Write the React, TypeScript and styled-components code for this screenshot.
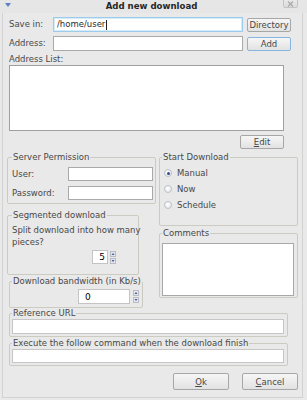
import styled, { createGlobalStyle } from 'styled-components'

const GlobalStyle = createGlobalStyle`
* { box-sizing: border-box; }
html, body { margin: 0; padding: 0; background: #e9e9e9; }
body {
    font-family: "DejaVu Sans", "Liberation Sans", sans-serif;
    font-size: 8.5px;
    color: #484848;
}
`

const Up = () => (
    <svg width="6" height="6" viewBox="0 0 6 6">
        <rect x="0.5" y="0.5" width="5" height="5" fill="#e4e6ea" stroke="#b9bcc4" />
        <path d="M1.5 4 L3 2 L4.5 4 Z" fill="#3f5fa8" />
    </svg>
)

const Down = () => (
    <svg width="6" height="6" viewBox="0 0 6 6">
        <rect x="0.5" y="0.5" width="5" height="5" fill="#e4e6ea" stroke="#b9bcc4" />
        <path d="M1.5 2 L3 4 L4.5 2 Z" fill="#3f5fa8" />
    </svg>
)

const App = () => {
    return (
        <Window>
            <GlobalStyle />
            <TitleBar>
                <MenuArrow>
                    <svg width="6" height="4" viewBox="0 0 6 4">
                        <path d="M0 0 L6 0 L3 4 Z" fill="#5b7fc4" />
                    </svg>
                </MenuArrow>
                <Title>Add new download</Title>
                <CloseBtn>
                    <svg width="7" height="6" viewBox="0 0 7 6">
                        <path d="M1 0.5 L6 5.5 M6 0.5 L1 5.5" stroke="#a8a8a8" strokeWidth="1.2" />
                    </svg>
                </CloseBtn>
            </TitleBar>

            <Body>
                <FormRow>
                    <RowLabel>Save in:</RowLabel>
                    <FocusField>
                        /home/user<Caret />
                    </FocusField>
                    <Button>Directory</Button>
                </FormRow>
                <FormRow>
                    <RowLabel>Address:</RowLabel>
                    <TextInput $h={15} />
                    <Button $default>Add</Button>
                </FormRow>

                <ListLabel>Address List:</ListLabel>
                <ListBox />
                <EditRow>
                    <Button><u>E</u>dit</Button>
                </EditRow>

                <Columns>
                    <Column>
                        <ServerGroup>
                            <Legend>Server Permission</Legend>
                            <PermGrid>
                                <GridLabel>User:</GridLabel>
                                <TextInput $h={14} />
                                <GridLabel>Password:</GridLabel>
                                <TextInput $h={14} />
                            </PermGrid>
                        </ServerGroup>

                        <SegmentGroup>
                            <Legend>Segmented download</Legend>
                            <GroupText>Split download into how many<br />pieces?</GroupText>
                            <SpinRow $pl={80} $mt={2}>
                                <SpinInput $w={16} $h={14} defaultValue="5" />
                                <SpinArrows><Up /><Down /></SpinArrows>
                            </SpinRow>
                        </SegmentGroup>

                        <BandwidthGroup>
                            <Legend>Download bandwidth (in Kb/s)</Legend>
                            <SpinRow $pl={66} $mt={1}>
                                <SpinInput $w={52} $h={15} $left defaultValue="0" />
                                <SpinArrows $gap={3}><Up /><Down /></SpinArrows>
                            </SpinRow>
                        </BandwidthGroup>
                    </Column>

                    <Column>
                        <StartGroup>
                            <Legend>Start Download</Legend>
                            <RadioList>
                                <RadioRow><Radio $checked />Manual</RadioRow>
                                <RadioRow><Radio />Now</RadioRow>
                                <RadioRow><Radio />Schedule</RadioRow>
                            </RadioList>
                        </StartGroup>

                        <CommentsGroup>
                            <Legend>Comments</Legend>
                            <CommentBox />
                        </CommentsGroup>
                    </Column>
                </Columns>

                <WideGroup>
                    <Legend>Reference URL</Legend>
                    <WideInput $h={15} />
                </WideGroup>

                <WideGroup $mt={1}>
                    <Legend>Execute the follow command when the download finish</Legend>
                    <WideInput $h={14} />
                </WideGroup>

                <ButtonRow>
                    <DialogButton><u>O</u>k</DialogButton>
                    <DialogButton><u>C</u>ancel</DialogButton>
                </ButtonRow>
            </Body>
        </Window>
    )
}

export default App

const Window = styled.div`
width: 307px;
height: 400px;
background: #e9e9e9;
overflow: hidden;
`

const TitleBar = styled.div`
height: 13px;
position: relative;
display: flex;
align-items: center;
justify-content: center;
background: #e6e6e6;
`

const MenuArrow = styled.span`
position: absolute;
left: 5px;
top: 3px;
display: flex;
`

const Title = styled.div`
font-weight: bold;
font-size: 8.6px;
color: #262626;
line-height: 13px;
margin-left: -4px;
`

const CloseBtn = styled.span`
position: absolute;
right: 9px;
top: -3px;
width: 15px;
height: 11px;
border: 1px solid #c4c4c4;
border-radius: 2px;
background: linear-gradient(#ececec, #dcdcdc);
display: flex;
align-items: center;
justify-content: center;
padding-top: 2px;
`

const Body = styled.div`
margin: 0 4px 0 2px;
border: 1px solid #d2d2d2;
border-top: none;
padding: 4px 15px 7px 6px;
`

const FormRow = styled.div`
display: grid;
grid-template-columns: 40px 190px 44px;
column-gap: 4px;
align-items: center;
height: 15px;
margin-bottom: 4px;
`

const RowLabel = styled.span`
line-height: 11px;
white-space: nowrap;
`

const TextInput = styled.input<{ $h: number }>`
display: block;
width: 100%;
height: ${p => p.$h}px;
margin: 0;
padding: 0 2px;
border: 1px solid #a9a9a9;
border-radius: 0;
background: #fff;
font: inherit;
outline: none;
`

const FocusField = styled.div`
height: 15px;
border: 1px solid #9ccbec;
background: #fff;
box-shadow: inset 0 0 0 1px #d6ebf8;
padding: 0 3px;
line-height: 13px;
color: #2a2a2a;
display: flex;
align-items: center;
`

const Caret = styled.span`
display: inline-block;
width: 1px;
height: 10px;
background: #222;
margin-left: 1px;
`

const Button = styled.button<{ $default?: boolean }>`
height: 14px;
margin: 0;
padding: 0;
border: 1px solid ${p => p.$default ? '#86b6df' : '#a7a7a7'};
border-radius: 2px;
background: linear-gradient(#f6f6f6, #e2e2e2);
font: inherit;
color: #484848;
line-height: 12px;
width: 44px;
`

const ListLabel = styled.div`
line-height: 11px;
margin-top: -1px;
`

const ListBox = styled.textarea`
display: block;
width: 275px;
height: 66px;
margin: 0;
border: 1px solid #a0a0a0;
background: #fff;
resize: none;
outline: none;
`

const EditRow = styled.div`
display: flex;
justify-content: flex-end;
width: 275px;
margin-top: 4px;
`

const Columns = styled.div`
display: grid;
grid-template-columns: 149px 139px;
column-gap: 3px;
width: 291px;
margin: 3px 0 0 -2px;
align-items: start;
`

const Column = styled.div`
display: flex;
flex-direction: column;
align-items: flex-start;
`

const Group = styled.fieldset`
margin: 0;
padding: 0;
min-width: 0;
border: 1px solid #cbcbc1;
border-radius: 2px;
`

const Legend = styled.legend`
margin-left: 0;
padding: 0 1px;
line-height: 11px;
font-size: 8.5px;
color: #484848;
white-space: nowrap;
`

const ServerGroup = styled(Group)`
width: 149px;
padding: 4px 2px 3px 4px;
`

const PermGrid = styled.div`
display: grid;
grid-template-columns: 56px 85px;
grid-auto-rows: 14px;
row-gap: 5px;
align-items: center;
`

const GridLabel = styled.span`
line-height: 11px;
`

const SegmentGroup = styled(Group)`
width: 132px;
margin-top: 6px;
padding: 3px 2px 10px 4px;
`

const GroupText = styled.div`
line-height: 12px;
white-space: nowrap;
`

const SpinRow = styled.div<{ $pl: number; $mt: number }>`
display: flex;
align-items: center;
padding-left: ${p => p.$pl}px;
margin-top: ${p => p.$mt}px;
`

const SpinInput = styled.input<{ $w: number; $h: number; $left?: boolean }>`
display: block;
width: ${p => p.$w}px;
height: ${p => p.$h}px;
margin: 0;
padding: 0 ${p => p.$left ? '0 0 6px' : '2px'};
border: 1px solid #c4c4c4;
background: #fff;
font: inherit;
font-size: 9px;
text-align: ${p => p.$left ? 'left' : 'right'};
outline: none;
`

const SpinArrows = styled.div<{ $gap?: number }>`
display: flex;
flex-direction: column;
gap: 1px;
margin-left: ${p => p.$gap ?? 2}px;
`

const BandwidthGroup = styled(Group)`
width: 134px;
margin: 1px 0 0 2px;
padding: 1px 2px 3px 2px;
`

const StartGroup = styled(Group)`
width: 139px;
padding: 2px 4px 12px 2px;
`

const RadioList = styled.div`
display: flex;
flex-direction: column;
padding-left: 2px;
`

const RadioRow = styled.div`
display: flex;
align-items: center;
gap: 5px;
height: 16px;
line-height: 11px;
`

const Radio = styled.span<{ $checked?: boolean }>`
position: relative;
width: 8px;
height: 8px;
border-radius: 50%;
border: 1px solid #bcc0c8;
background: radial-gradient(circle at 40% 35%, #ffffff, #e0e3e8);
&::after {
    content: "";
    display: ${p => p.$checked ? 'block' : 'none'};
    position: absolute;
    left: 1.5px;
    top: 1.5px;
    width: 3px;
    height: 3px;
    border-radius: 50%;
    background: #2e4b96;
}
`

const CommentsGroup = styled(Group)`
width: 139px;
margin-top: 2px;
padding: 4px 2px 1px 2px;
`

const CommentBox = styled.textarea`
display: block;
width: 132px;
height: 53px;
margin: 0;
border: 1px solid #a8a8a8;
background: #fff;
resize: none;
outline: none;
`

const WideGroup = styled(Group)<{ $mt?: number }>`
width: 279px;
margin-top: ${p => p.$mt ?? 0}px;
padding: 0 4px 2px 2px;
`

const WideInput = styled(TextInput)`
width: 272px;
border-color: #c6c6c6;
`

const ButtonRow = styled.div`
display: flex;
justify-content: flex-end;
gap: 13px;
margin: 7px -11px 0 0;
`

const DialogButton = styled(Button)`
width: 56px;
height: 17px;
`
